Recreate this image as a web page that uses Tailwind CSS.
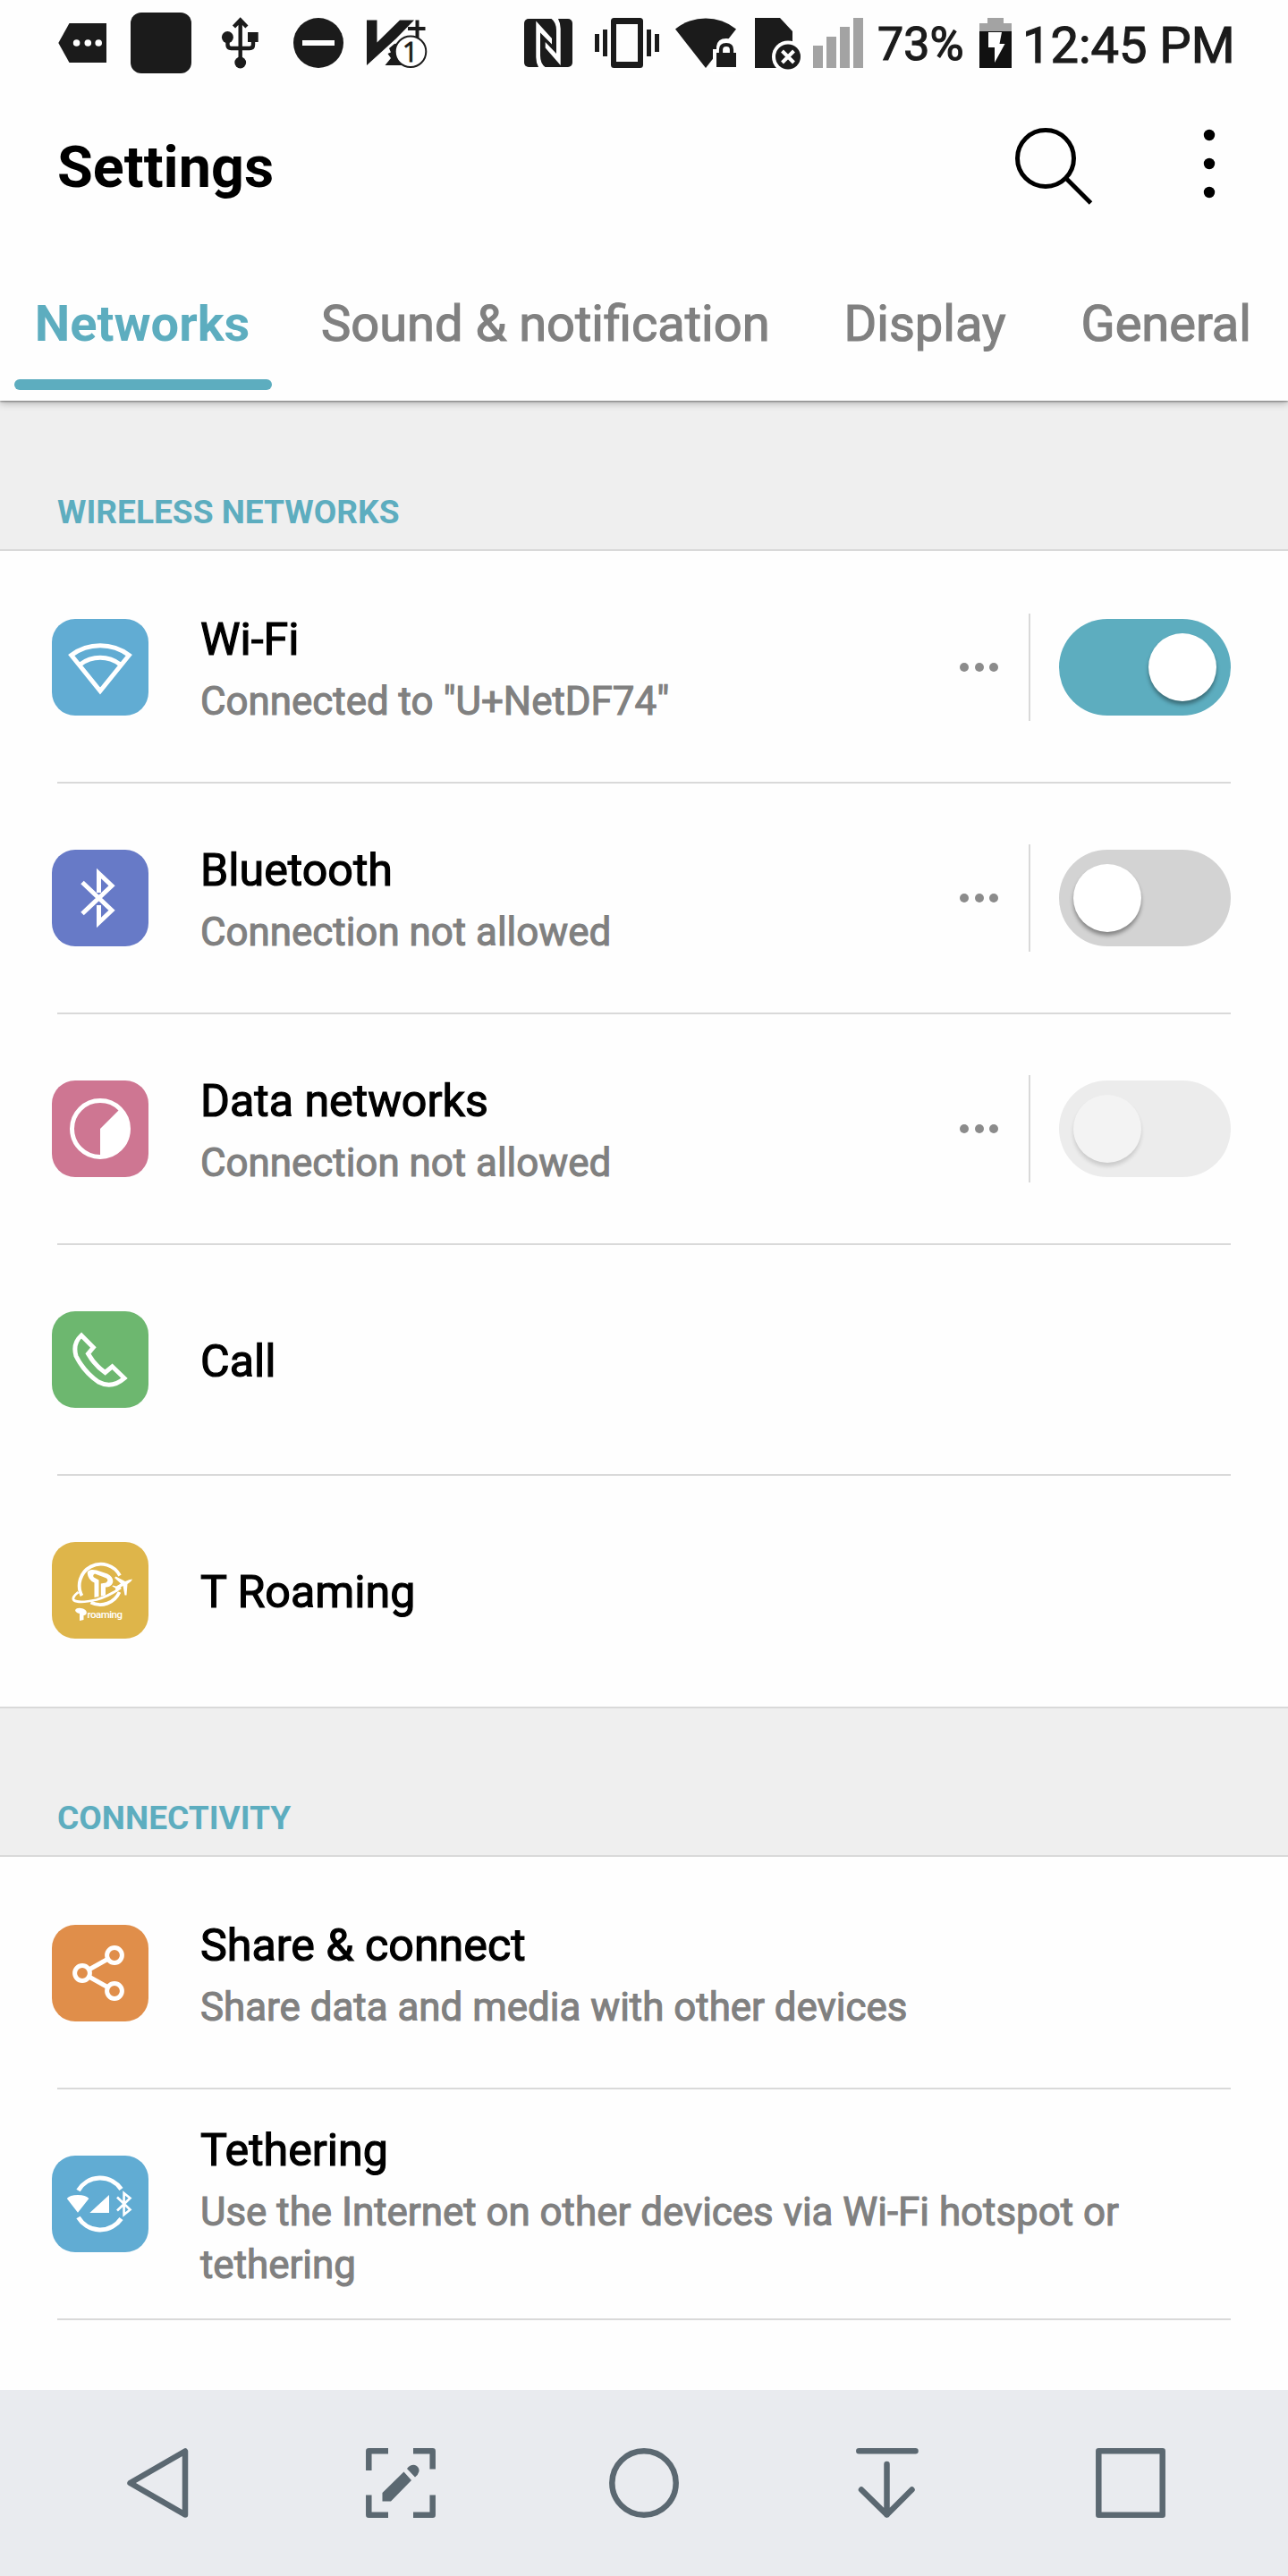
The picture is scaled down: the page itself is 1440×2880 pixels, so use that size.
<!DOCTYPE html>
<html lang="en">
<head>
<meta charset="utf-8">
<title>Settings</title>
<script src="https://cdn.jsdelivr.net/npm/@tailwindcss/browser@4"></script>
</head>
<body class="w-[1440px] h-[2880px] overflow-hidden bg-[#fefefe] font-[Roboto,sans-serif] text-black flex flex-col">

<header class="relative z-10 bg-[#fefefe] h-[448px] shrink-0 shadow-[0_1px_2px_rgba(0,0,0,0.4),0_3px_8px_rgba(0,0,0,0.25)]">
  <!-- Status bar -->
  <div class="h-[100px] flex pl-[60px] text-[#1b1b1b]">
    <svg class="w-[80px] h-[100px]" viewBox="60 0 80 100" fill="currentColor"><path d="M65.3 48 77.5 26H119V70H77.5Z"/><g fill="#fff"><circle cx="85.6" cy="48" r="3.8"/><circle cx="98.3" cy="48" r="3.8"/><circle cx="110.2" cy="48" r="3.8"/></g></svg>
    <svg class="w-[90px] h-[100px]" viewBox="140 0 90 100" fill="currentColor"><rect x="146" y="14" width="68" height="68" rx="12"/></svg>
    <svg class="w-[90px] h-[100px]" viewBox="230 0 90 100" fill="currentColor"><path d="M268.7 22.500V70M261.500 30 268.700 22.500 275.900 30M254.500 42V50Q254.500 54 258.500 54H279Q283 54 283 50V42" fill="none" stroke="currentColor" stroke-width="4.4"/><circle cx="254.400" cy="41.600" r="6.500"/><rect x="277" y="36" width="11.700" height="11"/><circle cx="268.700" cy="70" r="6.400"/></svg>
    <svg class="w-[80px] h-[100px]" viewBox="320 0 80 100"><circle cx="356" cy="48" r="28" fill="#1b1b1b"/><rect x="338" y="45" width="36" height="6" fill="#fff"/></svg>
    <svg class="w-[180px] h-[100px]" viewBox="400 0 180 100" fill="currentColor"><path d="M410 22.500H421.500V47.500L447 22.500H463L443 43 410 73ZM430.500 73 437 65 433.500 60 437 58.500 435 54 441 49 450 48V73Z"/><path d="M456 32H475.500M466.500 22.500V42" stroke="currentColor" stroke-width="4"/><circle cx="459" cy="57.700" r="17.300" fill="#fff" stroke="currentColor" stroke-width="2"/><text x="458.500" y="69" font-size="31" text-anchor="middle" font-family="Open Sans, sans-serif" stroke="currentColor" stroke-width="0.800">1</text></svg>
    <svg class="w-[75px] h-[100px]" viewBox="580 0 75 100"><rect x="586" y="21" width="54" height="54" rx="5" fill="#1b1b1b"/><g fill="#fff"><path d="M599.300 23.500 617 43V49.500L604 36.500V62Q604 71 609.500 75H602Q599.300 70 599.300 64Z"/><path d="M626.700 73 609.700 53.500V47L622 60V34Q622 25 616.500 21H624Q626.700 26 626.700 32Z"/></g></svg>
    <svg class="w-[90px] h-[100px]" viewBox="655 0 90 100" fill="currentColor"><path fill-rule="evenodd" d="M686.500 20H715.500Q719 20 719 23.500V72.500Q719 76 715.500 76H686.500Q683 76 683 72.500V23.500Q683 20 686.500 20ZM689 27V69H713V27Z"/><path d="M665 38h5v20h-5zM674 33h5v30h-5zM723 33h5v30h-5zM732 38h5v20h-5z"/></svg>
    <svg class="w-[90px] h-[100px]" viewBox="745 0 90 100" fill="currentColor"><path d="M755 32.500A54 54 0 0 1 823 32.500L789 76Z"/><path d="M797 80V55H801V52Q802 43 812 43T823 52V80Z" fill="#fff"/><rect x="801" y="59" width="22" height="16"/><path d="M806 60V55.500Q806 50 812 50T818 55.500V60" fill="none" stroke="currentColor" stroke-width="4.200"/></svg>
    <svg class="w-[65px] h-[100px]" viewBox="835 0 65 100" fill="currentColor"><path d="M844 20H872L886 35V76H844Z"/><circle cx="881" cy="63.500" r="18" fill="#fff"/><circle cx="881" cy="63.500" r="14"/><path d="M874.500 57 887.500 70M887.500 57 874.500 70" stroke="#fff" stroke-width="4"/></svg>
    <svg class="w-[81px] h-[100px]" viewBox="900 0 81 100" fill="#a3a3a3"><path d="M909 51h11v25h-11zM924 41h11v35h-11zM939 30h11v46h-11zM954 20h11v56h-11z"/></svg>
    <span class="w-[107px] text-[52px] leading-[100px] whitespace-nowrap [-webkit-text-stroke:1.2px_#1b1b1b]">73%</span>
    <svg class="w-[56px] h-[100px]" viewBox="1088 0 56 100"><path d="M1104 20h18v6h9v10h-36V26h9z" fill="#a3a3a3"/><rect x="1095" y="35" width="36" height="41" fill="#111"/><path d="M1105 36H1120L1117.500 49H1123.500L1112 70V53H1105Z" fill="#fff"/></svg>
    <span class="text-[56px] leading-[102px] whitespace-nowrap -ml-px [-webkit-text-stroke:1.2px_#1b1b1b]">12:45 PM</span>
  </div>

  <!-- App bar -->
  <div class="h-[174px] flex items-start justify-between pl-[64px]">
    <h1 class="text-[64.7px] leading-[174px] font-bold">Settings</h1>
    <div class="flex">
      <svg class="w-[160px] h-[174px]" viewBox="1120 100 160 174" fill="none" stroke="#000"><circle cx="1169" cy="177" r="31.500" stroke-width="5"/><path d="M1191.500 199 1219.500 227" stroke-width="5"/></svg>
      <svg class="w-[160px] h-[174px]" viewBox="1280 100 160 174"><circle cx="1352" cy="151" r="6.200"/><circle cx="1352" cy="183" r="6.200"/><circle cx="1352" cy="215" r="6.200"/></svg>
    </div>
  </div>

  <!-- Tabs -->
  <nav class="h-[174px] flex pl-4 text-[56px] leading-[98px] text-[#808080] whitespace-nowrap">
    <div class="w-[288px] flex flex-col items-center pt-[39px] font-bold text-[#5dadbf]"><span class="-ml-[2px]">Networks</span><div class="mt-[13px] w-full h-3 rounded-full bg-[#5dadbf]"></div></div>
    <div class="ml-[55px] pt-[39px] [-webkit-text-stroke:1.2px_#808080]">Sound &amp; notification</div>
    <div class="ml-[83px] pt-[39px] [-webkit-text-stroke:1.2px_#808080]">Display</div>
    <div class="ml-[84px] pt-[39px] [-webkit-text-stroke:1.2px_#808080]">General</div>
  </nav>
</header>

<main class="flex-1 overflow-hidden">
  <h2 class="h-[168px] bg-[#efefef] border-b-2 border-[#d9d9d9] flex items-end pl-[64px] pb-[16px] text-[37.1px] leading-[50px] font-bold text-[#5dadbf]">WIRELESS NETWORKS</h2>
  <section class="pt-[2px]">
    <div class="mx-[64px] h-[258px] border-b-2 border-[#d9d9d9] flex items-center">
      <svg class="-ml-[6px] size-[108px] shrink-0 rounded-[26px] bg-[#61acd3]" viewBox="0 0 108 108" fill="none" stroke="#fff" stroke-width="5"><path d="M21.700 40.500A54 54 0 0 1 86.300 40.500L54 80.500ZM31.500 51A37 37 0 0 1 76.500 51"/></svg>
      <div class="ml-[58px] pt-2 flex-1 flex flex-col gap-[11px]"><div class="text-[50.2px] leading-[58px] [-webkit-text-stroke:1.2px_#000]">Wi-Fi</div><div class="text-[43.9px] leading-[59px] text-[#808080] [-webkit-text-stroke:1.1px_#808080]">Connected to "U+NetDF74"</div></div>
      <div class="flex gap-[6.500px] mr-[34px]"><i class="size-[10px] rounded-full bg-[#8b8b8b]"></i><i class="size-[10px] rounded-full bg-[#8b8b8b]"></i><i class="size-[10px] rounded-full bg-[#8b8b8b]"></i></div>
      <div class="w-[2px] h-[120px] bg-[#d9d9d9] mr-[32px]"></div>
      <div class="w-[192px] h-[108px] rounded-full bg-[#5dadbf] flex items-center justify-end px-4"><div class="size-[76px] rounded-full bg-white shadow-[0_4px_4px_rgba(0,0,0,0.36)]"></div></div>
    </div>
    <div class="mx-[64px] h-[258px] border-b-2 border-[#d9d9d9] flex items-center">
      <svg class="-ml-[6px] size-[108px] shrink-0 rounded-[26px] bg-[#677ac7]" viewBox="0 0 108 108" fill="none" stroke="#fff" stroke-width="5"><path d="M34 36.500 67 67.800 52.500 81.500V62M34 71.500 67 40.200 52.500 26.500V48"/></svg>
      <div class="ml-[58px] pt-2 flex-1 flex flex-col gap-[11px]"><div class="text-[50.2px] leading-[58px] [-webkit-text-stroke:1.2px_#000]">Bluetooth</div><div class="text-[43.9px] leading-[59px] text-[#808080] [-webkit-text-stroke:1.1px_#808080]">Connection not allowed</div></div>
      <div class="flex gap-[6.500px] mr-[34px]"><i class="size-[10px] rounded-full bg-[#8b8b8b]"></i><i class="size-[10px] rounded-full bg-[#8b8b8b]"></i><i class="size-[10px] rounded-full bg-[#8b8b8b]"></i></div>
      <div class="w-[2px] h-[120px] bg-[#d9d9d9] mr-[32px]"></div>
      <div class="w-[192px] h-[108px] rounded-full bg-[#d3d3d3] flex items-center px-4"><div class="size-[76px] rounded-full bg-white shadow-[0_4px_4px_rgba(0,0,0,0.36)]"></div></div>
    </div>
    <div class="mx-[64px] h-[258px] border-b-2 border-[#d9d9d9] flex items-center">
      <svg class="-ml-[6px] size-[108px] shrink-0 rounded-[26px] bg-[#ce7692]" viewBox="0 0 108 108"><circle cx="54" cy="54" r="31.500" fill="none" stroke="#fff" stroke-width="5"/><path d="M54 54 75.500 32.500A31 31 0 0 1 54 86Z" fill="#fff"/></svg>
      <div class="ml-[58px] pt-2 flex-1 flex flex-col gap-[11px]"><div class="text-[50.2px] leading-[58px] [-webkit-text-stroke:1.2px_#000]">Data networks</div><div class="text-[43.9px] leading-[59px] text-[#808080] [-webkit-text-stroke:1.1px_#808080]">Connection not allowed</div></div>
      <div class="flex gap-[6.500px] mr-[34px]"><i class="size-[10px] rounded-full bg-[#8b8b8b]"></i><i class="size-[10px] rounded-full bg-[#8b8b8b]"></i><i class="size-[10px] rounded-full bg-[#8b8b8b]"></i></div>
      <div class="w-[2px] h-[120px] bg-[#d9d9d9] mr-[32px]"></div>
      <div class="w-[192px] h-[108px] rounded-full bg-[#ececec] flex items-center px-4"><div class="size-[76px] rounded-full bg-[#f3f3f3] shadow-[0_4px_4px_rgba(0,0,0,0.14)]"></div></div>
    </div>
    <div class="mx-[64px] h-[258px] border-b-2 border-[#d9d9d9] flex items-center">
      <svg class="-ml-[6px] size-[108px] shrink-0 rounded-[26px] bg-[#6db76f]" viewBox="0 0 108 108" fill="none" stroke="#fff" stroke-width="5"><path d="M33 27 46.300 40.500 40.500 47.500Q48 60.500 59.500 68.500L67.500 61.800 81 74.800Q67 87 52 79 36 68 27 50 23 36 33 27Z"/></svg>
      <div class="ml-[58px] pt-1 text-[50.2px] leading-[58px] [-webkit-text-stroke:1.2px_#000]">Call</div>
    </div>
    <div class="mx-[64px] h-[256px] flex items-center">
      <svg class="-ml-[6px] size-[108px] shrink-0 rounded-[26px] bg-[#deb54a]" viewBox="0 0 108 108" fill="none" stroke="#fff"><path d="M33.500 60A23.500 23.500 0 1 1 76 37.500M75.500 56A23.500 23.500 0 0 1 43.500 67.500" stroke-width="3.800"/><path d="M29.500 56Q22 62 24.500 65 30 69 50 64.500 65 60 77 51" stroke-width="2.800"/><path fill="#fff" stroke="none" d="M39.700 35C39.500 30.500 46 30.500 50 31.500L62 35.500C69 39 70 45 66 48.500 63.500 50.500 61 50.500 60 50.500V59.500L54.800 60.500V46.500L60.500 45.500Q64 43 61 40.500L56 38.500 48 35.500Q45 37 47 39.500L52.500 42.500V61L47.500 62V45.500Q40.500 42.500 39.700 35Z"/><path fill="#fff" stroke="none" d="M26 76Q28 72.500 35 74.500 40 76.500 38.500 80.500 37 82 35.500 82V87L31 88V80Q26.500 79 26 76Z"/><path fill="#fff" stroke="none" d="M90 41.500Q86.500 41.500 82 44L71.500 38.500 70 40 77 46.500 72 49.500 68 48.500 67.500 49.500 71 51.500 71.500 56 73 55.500 74.500 52 79.500 49 81.500 59.500H83.500L84.500 47Q89 44 90 41.500Z"/><text x="39.500" y="84.500" font-size="11.500" font-weight="500" fill="#fff" stroke="none" textLength="39.500">roaming</text></svg>
      <div class="ml-[58px] pt-1 text-[50.2px] leading-[58px] [-webkit-text-stroke:1.2px_#000]">T Roaming</div>
    </div>
  </section>

  <h2 class="mt-[2px] h-[168px] bg-[#efefef] border-y-2 border-[#d9d9d9] flex items-end pl-[64px] pb-[16px] text-[37.1px] leading-[50px] font-bold text-[#5dadbf]">CONNECTIVITY</h2>
  <section class="pt-[2px]">
    <div class="mx-[64px] h-[258px] border-b-2 border-[#d9d9d9] flex items-center">
      <svg class="-ml-[6px] size-[108px] shrink-0 rounded-[26px] bg-[#e08e4a]" viewBox="0 0 108 108" fill="none" stroke="#fff" stroke-width="5"><circle cx="34" cy="54" r="8.400"/><circle cx="70" cy="34" r="8.400"/><circle cx="70" cy="74" r="8.400"/><path d="M41.500 50 62.500 38.300M41.500 58 62.500 69.700"/></svg>
      <div class="ml-[58px] pt-2 flex flex-col gap-[11px]"><div class="text-[50.2px] leading-[58px] [-webkit-text-stroke:1.2px_#000]">Share &amp; connect</div><div class="text-[43.9px] leading-[59px] text-[#808080] [-webkit-text-stroke:1.1px_#808080]">Share data and media with other devices</div></div>
    </div>
    <div class="mx-[64px] h-[258px] border-b-2 border-[#d9d9d9] flex items-center">
      <svg class="-ml-[6px] size-[108px] shrink-0 rounded-[26px] bg-[#61acd3]" viewBox="0 0 108 108" fill="none" stroke="#fff"><path d="M29.500 39A28.500 28.500 0 0 1 77.500 37.500M29.500 69A28.500 28.500 0 0 0 77.500 70.500" stroke-width="5"/><path d="M16.800 48Q20 44 29 44T41.400 48L29 63.700ZM42.300 64 64 44V64Z" fill="#fff" stroke="none"/><path d="M73 46.500 87.500 60.500 80.600 66V42L87.500 47.500 73 61.500" stroke-width="2.600"/></svg>
      <div class="ml-[58px] pt-2 flex flex-col gap-[11px]"><div class="text-[50.2px] leading-[58px] [-webkit-text-stroke:1.2px_#000]">Tethering</div><div class="text-[43.9px] leading-[59px] text-[#808080] [-webkit-text-stroke:1.1px_#808080]">Use the Internet on other devices via Wi-Fi hotspot or<br>tethering</div></div>
    </div>
  </section>
</main>

<!-- Navigation bar -->
<footer class="h-[208px] shrink-0 bg-[#e9ebef] flex items-center justify-between px-[128px]">
  <svg class="w-[96px] h-[96px]" viewBox="128 2728 96 96" fill="none" stroke="#5b6871" stroke-width="6.500" stroke-linejoin="round"><path d="M145.500 2776 207 2740.500V2811.500Z"/></svg>
  <svg class="w-[96px] h-[96px]" viewBox="400 2728 96 96" fill="none" stroke="#5b6871" stroke-width="6.500"><path stroke-linejoin="round" d="M412.300 2762V2740.300H434M462 2740.300H483.700V2760.500M412.300 2789.500V2811.700H434M462 2811.700H483.700V2789.500"/><path d="M427.500 2787V2796.500H437L460 2773 451.500 2763.500ZM455 2760Q459 2755 464 2756 469 2758 468.500 2763 467.500 2767 464 2769.500Z" fill="#5b6871" stroke="none"/></svg>
  <svg class="w-[96px] h-[96px]" viewBox="672 2728 96 96" fill="none" stroke="#5b6871" stroke-width="6.500"><circle cx="720" cy="2776" r="35.700"/></svg>
  <svg class="w-[96px] h-[96px]" viewBox="944 2728 96 96" fill="none" stroke="#5b6871" stroke-width="6.500" stroke-linecap="round" stroke-linejoin="round"><path d="M960.300 2740.300H1023.500M991.500 2755V2811.500M963 2783.500 991.500 2811.500 1019.500 2783.500"/></svg>
  <svg class="w-[96px] h-[96px]" viewBox="1216 2728 96 96" fill="none" stroke="#5b6871" stroke-width="6.500" stroke-linejoin="round"><rect x="1228.300" y="2740.300" width="71.400" height="71.400"/></svg>
</footer>
</body>
</html>
